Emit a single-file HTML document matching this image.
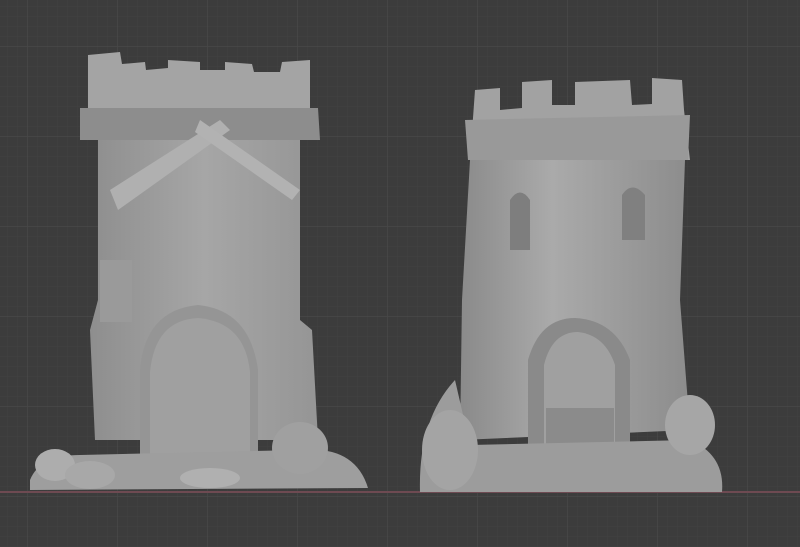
<!DOCTYPE html>
<html><head><style>
html,body{margin:0;padding:0;width:800px;height:547px;overflow:hidden;background:#3c3c3c}
svg{display:block}
</style></head><body>
<svg width="800" height="547" viewBox="0 0 800 547" xmlns="http://www.w3.org/2000/svg">
<defs>
<pattern id="g" width="10" height="10" patternUnits="userSpaceOnUse" x="7" y="6">
<path d="M0 0H10M0 0V10" stroke="#424242" stroke-width="1"/>
</pattern>
<pattern id="G" width="90" height="90" patternUnits="userSpaceOnUse" x="27" y="46">
<path d="M0 0H90M0 0V90" stroke="#484848" stroke-width="1.5"/>
</pattern>
<linearGradient id="lt" x1="0" x2="1"><stop offset="0" stop-color="#8e8e8e"/><stop offset=".5" stop-color="#a6a6a6"/><stop offset="1" stop-color="#959595"/></linearGradient>
<linearGradient id="rt" x1="0" x2="1"><stop offset="0" stop-color="#8a8a8a"/><stop offset=".4" stop-color="#aaaaaa"/><stop offset="1" stop-color="#8c8c8c"/></linearGradient>
</defs>
<rect width="800" height="547" fill="url(#g)"/>
<rect width="800" height="547" fill="url(#G)"/>
<rect x="0" y="491" width="800" height="2" fill="#6e4a52"/>

<g>
<path d="M88 55 L120 52 L122 64 L145 62 L146 70 L168 68 L168 60 L200 62 L200 70 L225 70 L225 62 L252 64 L254 72 L280 72 L282 62 L310 60 L310 108 L88 108 Z" fill="#a4a4a4"/>
<path d="M80 108 L318 108 L320 140 L80 140 Z" fill="#8d8d8d"/>
<path d="M98 140 L300 140 L300 320 L312 330 L318 440 L95 440 L90 330 L98 300 Z" fill="url(#lt)"/>
<path d="M110 190 L220 120 L230 130 L118 210 Z" fill="#b0b0b0"/>
<path d="M200 120 L300 190 L292 200 L195 132 Z" fill="#b2b2b2"/>
<path d="M100 260 L132 260 L132 322 L100 322 Z" fill="#9a9a9a"/>
<path d="M140 455 L140 370 Q145 310 198 305 Q250 310 258 370 L258 455 Z" fill="#959595"/>
<path d="M150 455 L150 372 Q155 320 198 318 Q245 322 250 372 L250 455 Z" fill="#a0a0a0"/>
<path d="M30 480 Q40 455 80 455 L300 450 Q355 445 368 488 L30 490 Z" fill="#9e9e9e"/>
<ellipse cx="55" cy="465" rx="20" ry="16" fill="#adadad"/>
<ellipse cx="90" cy="475" rx="25" ry="14" fill="#a8a8a8"/>
<ellipse cx="300" cy="448" rx="28" ry="26" fill="#a0a0a0"/>
<ellipse cx="210" cy="478" rx="30" ry="10" fill="#b0b0b0"/>
</g>

<g>
<path d="M475 90 L500 88 L500 110 L522 108 L522 82 L552 80 L552 105 L575 105 L575 82 L630 80 L632 105 L652 104 L652 78 L682 80 L684 110 L690 160 L470 160 Z" fill="#a2a2a2"/>
<path d="M465 120 L690 115 L688 160 L468 160 Z" fill="#999"/>
<path d="M470 160 L685 160 L680 300 L690 430 L460 440 L462 300 Z" fill="url(#rt)"/>
<path d="M510 250 L510 200 Q520 185 530 200 L530 250 Z" fill="#7e7e7e"/>
<path d="M622 240 L622 195 Q632 180 645 195 L645 240 Z" fill="#808080"/>
<path d="M528 450 L528 360 Q540 318 575 318 Q615 320 630 360 L630 450 Z" fill="#8a8a8a"/>
<path d="M544 445 L544 365 Q552 332 578 332 Q605 335 615 365 L615 445 Z" fill="#a0a0a0"/>
<rect x="546" y="408" width="68" height="37" fill="#8b8b8b"/>
<path d="M420 492 Q418 420 455 380 L470 445 L690 440 Q725 455 722 492 Z" fill="#9c9c9c"/>
<ellipse cx="690" cy="425" rx="25" ry="30" fill="#a6a6a6"/>
<ellipse cx="450" cy="450" rx="28" ry="40" fill="#a4a4a4"/>
</g>
</svg>
</body></html>
